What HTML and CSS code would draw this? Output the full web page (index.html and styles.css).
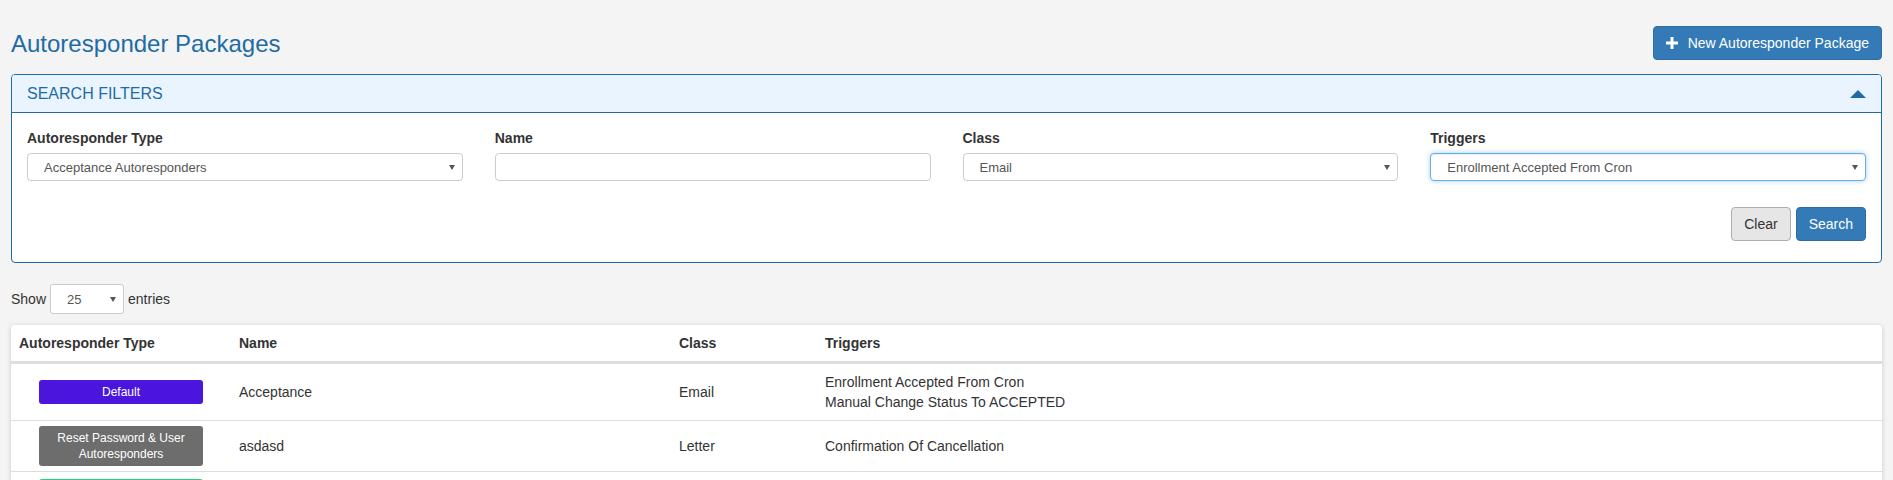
FILE: index.html
```html
<!DOCTYPE html>
<html lang="en">
<head>
    <meta charset="UTF-8">
    <meta name="viewport" content="width=device-width, initial-scale=1.0">
    <title>Autoresponder Packages</title>
    <link rel="stylesheet" href="styles.css">
</head>
<body>
    <div class="page">
        <div class="page-head">
            <h3 class="page-title">Autoresponder Packages</h3>
            <button class="btn btn-primary btn-new">
                <svg class="icon-plus" width="12" height="12" viewBox="0 0 12 12"><path d="M4.5 0h3v4.5H12v3H7.5V12h-3V7.5H0v-3h4.5z" fill="#fff"/></svg>
                New Autoresponder Package
            </button>
        </div>

        <div class="panel">
            <div class="panel-heading">
                <span>SEARCH FILTERS</span>
                <span class="caret-up"></span>
            </div>
            <div class="panel-body">
                <div class="filters">
                    <div class="form-group">
                        <label for="type">Autoresponder Type</label>
                        <div class="select-wrap">
                            <select id="type" class="form-control">
                                <option>Acceptance Autoresponders</option>
                            </select>
                        </div>
                    </div>
                    <div class="form-group">
                        <label for="name">Name</label>
                        <input type="text" id="name" class="form-control">
                    </div>
                    <div class="form-group">
                        <label for="class">Class</label>
                        <div class="select-wrap">
                            <select id="class" class="form-control">
                                <option>Email</option>
                            </select>
                        </div>
                    </div>
                    <div class="form-group">
                        <label for="triggers">Triggers</label>
                        <div class="select-wrap">
                            <select id="triggers" class="form-control focused">
                                <option>Enrollment Accepted From Cron</option>
                            </select>
                        </div>
                    </div>
                </div>
                <div class="filter-actions">
                    <button class="btn btn-default">Clear</button>
                    <button class="btn btn-primary">Search</button>
                </div>
            </div>
        </div>

        <div class="table-length">
            Show
            <span class="select-wrap select-sm">
                <select class="form-control">
                    <option>25</option>
                </select>
            </span>
            entries
        </div>

        <div class="table-card">
            <table class="data-table">
                <colgroup>
                    <col style="width:220px">
                    <col style="width:440px">
                    <col style="width:146px">
                    <col>
                </colgroup>
                <thead>
                    <tr>
                        <th>Autoresponder Type</th>
                        <th>Name</th>
                        <th>Class</th>
                        <th>Triggers</th>
                    </tr>
                </thead>
                <tbody>
                    <tr>
                        <td class="type-cell"><span class="type-badge badge-default">Default</span></td>
                        <td>Acceptance</td>
                        <td>Email</td>
                        <td>Enrollment Accepted From Cron<br>Manual Change Status To ACCEPTED</td>
                    </tr>
                    <tr>
                        <td class="type-cell"><span class="type-badge badge-reset">Reset Password &amp; User Autoresponders</span></td>
                        <td>asdasd</td>
                        <td>Letter</td>
                        <td>Confirmation Of Cancellation</td>
                    </tr>
                    <tr class="row-partial">
                        <td class="type-cell"><span class="type-badge badge-enroll"></span></td>
                        <td></td>
                        <td></td>
                        <td></td>
                    </tr>
                </tbody>
            </table>
        </div>
    </div>
</body>
</html>
```

FILE: styles.css
```css
:root {
    --blue: #1d6ca5;
    --primary: #337ab7;
    --line: #dddddd;
}
* {
    box-sizing: border-box;
}
body {
    font-family: "Liberation Sans", Arial, Helvetica, sans-serif;
    font-size: 14px;
    line-height: 20px;
    margin: 0;
    background-color: #f4f4f4;
    color: #333;
}
.page {
    padding: 26px 11px 0;
}
.page-head {
    display: flex;
    justify-content: space-between;
    align-items: center;
    height: 34px;
}
.page-title {
    margin: 0;
    font-size: 24px;
    font-weight: normal;
    line-height: 27px;
    color: var(--blue);
}
.btn {
    height: 34px;
    padding: 6px 12px;
    font-family: inherit;
    font-size: 14px;
    line-height: 20px;
    border: 1px solid transparent;
    border-radius: 4px;
    cursor: pointer;
}
.btn-primary {
    background: var(--primary);
    border-color: #2e6da4;
    color: #fff;
}
.btn-default {
    background: #e6e6e6;
    border-color: #adadad;
    color: #333;
}
.btn-new {
    display: flex;
    align-items: center;
}
.icon-plus {
    margin-right: 10px;
}
.panel {
    margin-top: 14px;
    background: #fff;
    border: 1px solid var(--blue);
    border-radius: 4px;
}
.panel-heading {
    display: flex;
    justify-content: space-between;
    align-items: center;
    height: 38px;
    padding: 0 15px;
    background: #eaf4fe;
    border-bottom: 1px solid var(--blue);
    border-radius: 3px 3px 0 0;
    color: var(--blue);
    font-size: 16px;
}
.caret-up {
    width: 0;
    height: 0;
    border-left: 8px solid transparent;
    border-right: 8px solid transparent;
    border-bottom: 8px solid var(--blue);
}
.panel-body {
    padding: 15px 15px 21px;
}
.filters {
    display: grid;
    grid-template-columns: repeat(4, 1fr);
    gap: 32px;
}
label {
    display: block;
    margin-bottom: 5px;
    font-weight: bold;
}
.form-control {
    display: block;
    width: 100%;
    height: 28px;
    padding: 0 16px;
    font-family: inherit;
    font-size: 13px;
    color: #555;
    background: #fff;
    border: 1px solid #ccc;
    border-radius: 4px;
    appearance: none;
    -webkit-appearance: none;
    outline: none;
}
.form-control.focused {
    border-color: #66afe9;
    box-shadow: inset 0 1px 1px rgba(0,0,0,.075), 0 0 5px rgba(102,175,233,.6);
}
.select-wrap {
    position: relative;
}
.select-wrap::after {
    content: "";
    position: absolute;
    right: 8px;
    top: 50%;
    margin-top: -2px;
    border-left: 3px solid transparent;
    border-right: 3px solid transparent;
    border-top: 5px solid #555;
    pointer-events: none;
}
.filter-actions {
    display: flex;
    justify-content: flex-end;
    gap: 5px;
    margin-top: 26px;
}
.table-length {
    margin-top: 21px;
    display: flex;
    align-items: center;
    gap: 4px;
}
.select-sm {
    display: inline-block;
    width: 74px;
}
.select-sm .form-control {
    height: 30px;
    border-radius: 3px;
}
.table-card {
    margin-top: 11px;
    background: #fff;
    border-radius: 4px;
    box-shadow: 0 1px 5px rgba(0,0,0,.18);
}
.data-table {
    width: 100%;
    border-collapse: collapse;
    table-layout: fixed;
}
.data-table th {
    padding: 8px;
    text-align: left;
    border-bottom: 3px solid var(--line);
}
.data-table td {
    padding: 8px;
    vertical-align: middle;
    border-bottom: 1px solid var(--line);
}
.data-table td.type-cell {
    padding: 5px 8px;
    text-align: center;
}
.data-table .row-partial td.type-cell {
    padding-top: 7px;
}
.type-badge {
    display: inline-block;
    width: 164px;
    padding: 4px 8px;
    font-size: 12px;
    line-height: 16px;
    color: #fff;
    border-radius: 3px;
    vertical-align: middle;
}
.badge-default {
    background: #4a16dd;
}
.badge-reset {
    background: #6d6d6d;
}
.badge-enroll {
    height: 40px;
    background: #2ecc71;
}
```
